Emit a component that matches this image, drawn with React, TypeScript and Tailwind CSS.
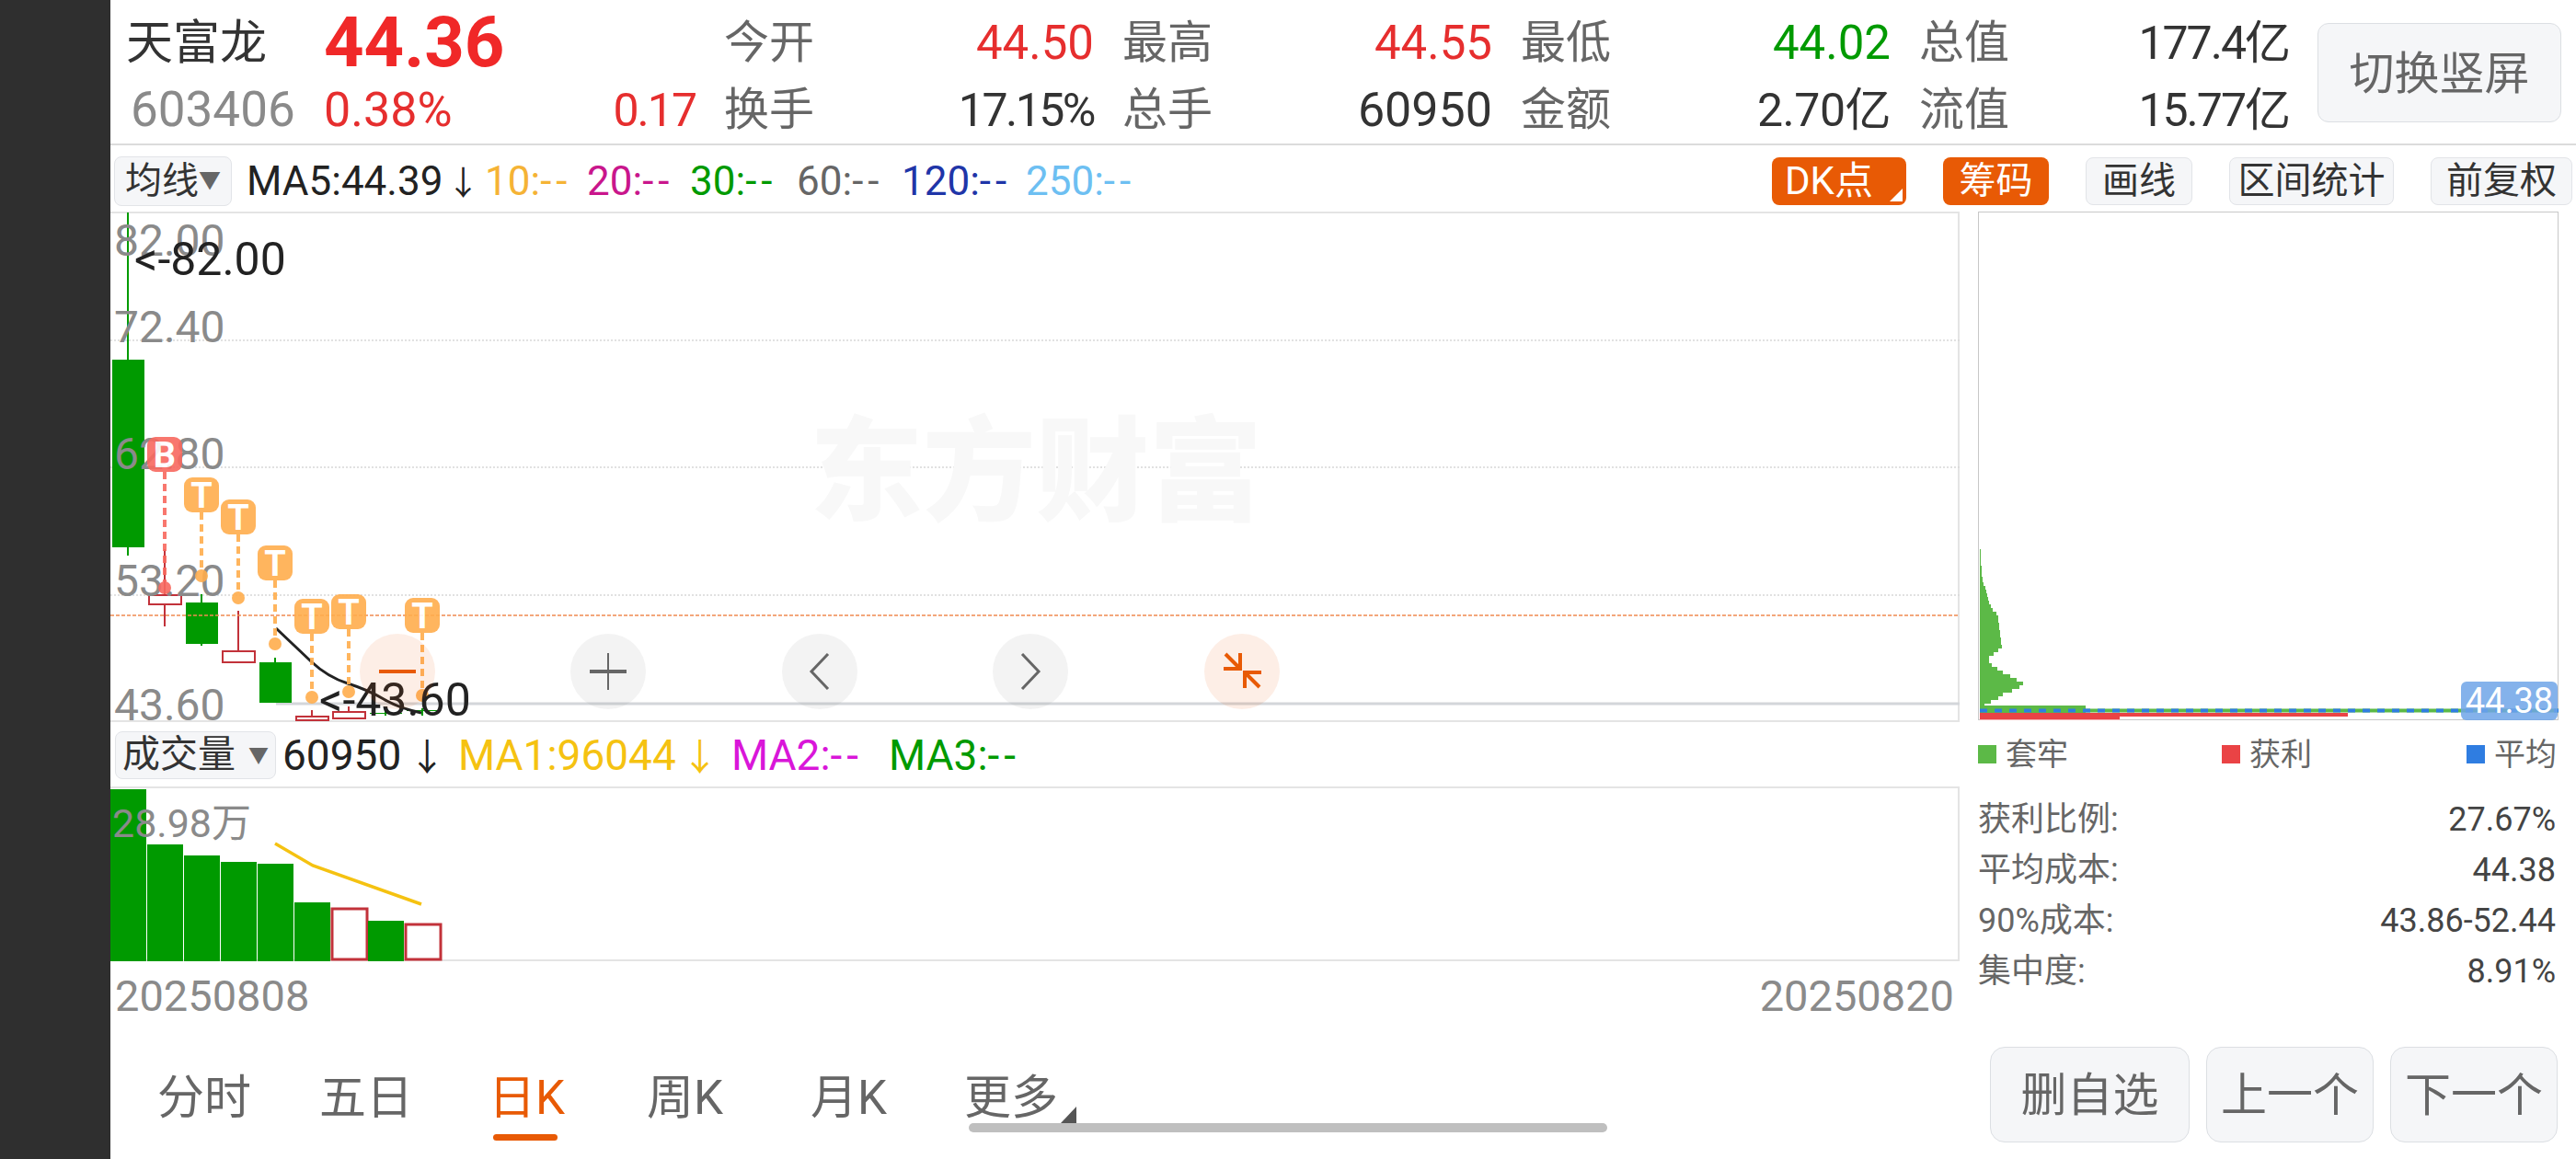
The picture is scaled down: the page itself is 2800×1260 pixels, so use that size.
import type { ReactNode } from 'react';

const FONT = { fontFamily: 'Roboto, "Noto Sans CJK SC", sans-serif' };

const GREEN = '#009a00';
const RED = '#c2323a';
const ORANGE = '#ffad4d';

// x = candle centre, top/bottom = body, hi/lo = wick
const candles = [
  { x: 139, top: 391, bottom: 595, hi: 231, lo: 604, up: false },
  { x: 179, top: 647, bottom: 657, hi: 597, lo: 681, up: true },
  { x: 219, top: 655, bottom: 700, hi: 646, lo: 702, up: false },
  { x: 259, top: 708, bottom: 720, hi: 664, lo: 720, up: true },
  { x: 299, top: 720, bottom: 764, hi: 715, lo: 764, up: false },
  { x: 339, top: 779, bottom: 783, hi: 772, lo: 783, up: true },
  { x: 379, top: 774, bottom: 781, hi: 768, lo: 781, up: true },
  { x: 419, top: 775, bottom: 776, hi: 768, lo: 778, up: false },
  { x: 459, top: 772, bottom: 773, hi: 770, lo: 778, up: false },
];

const markers = [
  { x: 179, top: 475, dot: 639, label: 'B' },
  { x: 219, top: 519, dot: 626, label: 'T' },
  { x: 259, top: 543, dot: 650, label: 'T' },
  { x: 299, top: 593, dot: 700, label: 'T' },
  { x: 339, top: 651, dot: 758, label: 'T' },
  { x: 379, top: 646, dot: 752, label: 'T' },
  { x: 459, top: 650, dot: 756, label: 'T' },
];

const priceLabels = [
  { text: '82.00', y: 278 },
  { text: '72.40', y: 372 },
  { text: '62.80', y: 510 },
  { text: '53.20', y: 648 },
  { text: '43.60', y: 783 },
];

const volumes = [
  { x: 120, top: 858, up: false },
  { x: 160, top: 918, up: false },
  { x: 200, top: 930, up: false },
  { x: 240, top: 937, up: false },
  { x: 280, top: 939, up: false },
  { x: 320, top: 981, up: false },
  { x: 360, top: 988, up: true },
  { x: 400, top: 1001, up: false },
  { x: 440, top: 1005, up: true },
];

// chip distribution: [offset from top, width]
const chips = [
  [0, 1], [6, 1], [12, 1], [18, 2], [24, 2], [30, 3], [36, 4], [40, 6], [44, 7], [48, 8], [52, 9], [56, 10],
  [60, 12], [64, 14], [68, 18], [72, 20], [76, 20], [80, 21], [84, 21], [88, 22], [92, 22], [96, 23], [100, 23],
  [104, 24], [108, 20], [112, 15], [116, 10], [120, 10], [124, 13], [128, 19], [132, 25], [136, 33], [140, 40],
  [144, 47], [148, 43], [152, 35], [156, 25], [160, 20], [164, 12], [168, 5],
];

function CandleChart() {
  return (
    <svg width={2010} height={552} viewBox="120 232 2010 552" className="block overflow-visible">
      {/* grid */}
      {[370, 508, 647].map((y) => (
        <line key={y} x1={120} x2={2130} y1={y} y2={y} stroke="#d8d8d8" strokeWidth={1.5} strokeDasharray="2 2" />
      ))}
      <line x1={300} x2={2130} y1={765} y2={765} stroke="#d3d6da" strokeWidth={3} />
      <text x={880} y={556} fontSize={123} fontWeight={900} fill="#f8f8f8" style={FONT}>
        东方财富
      </text>

      {/* candles */}
      {candles.map((c) => (
        <g key={c.x}>
          <line x1={c.x} x2={c.x} y1={c.hi} y2={c.lo} stroke={c.up ? RED : GREEN} strokeWidth={2} />
          <rect
            x={c.x - 17}
            y={c.top}
            width={35}
            height={c.bottom - c.top}
            fill={c.up ? '#fff' : GREEN}
            stroke={c.up ? RED : GREEN}
            strokeWidth={c.up ? 2 : 0}
          />
        </g>
      ))}

      <line x1={120} x2={2130} y1={669} y2={669} stroke="#ef8a50" strokeWidth={1.5} strokeDasharray="4 2" />

      {/* MA5 */}
      <path d="M300 683 Q320 702 338 719 T378 743 T417 760 T458 775" fill="none" stroke="#222" strokeWidth={3} />

      {/* axis labels */}
      {priceLabels.map((p) => (
        <text key={p.text} x={124} y={p.y} fontSize={48} fill="#8a8a8a" style={FONT}>
          {p.text}
        </text>
      ))}
      <text x={146} y={299} fontSize={50} fill="#222" style={FONT}>
        {'<-82.00'}
      </text>

      {/* trade markers */}
      {markers.map((m) => {
        const isBuy = m.label === 'B';
        const fill = isBuy ? '#f8695f' : ORANGE;
        return (
          <g key={m.x} opacity={0.9}>
            <line x1={m.x} x2={m.x} y1={m.top + 38} y2={m.dot} stroke={fill} strokeWidth={4} strokeDasharray="8 5" />
            <circle cx={m.x} cy={m.dot} r={7} fill={fill} />
            <rect x={m.x - 19} y={m.top} width={38} height={38} rx={9} fill={fill} />
            <text x={m.x} y={m.top + 33} fontSize={38} fontWeight={700} textAnchor="middle" fill="#fff" style={FONT}>
              {m.label}
            </text>
          </g>
        );
      })}

      <text x={347} y={778} fontSize={50} fill="#222" style={FONT}>
        {'<-43.60'}
      </text>
    </svg>
  );
}

function RoundButton({ tint, children, x }: { tint: string; children: ReactNode; x: string }) {
  return (
    <div className={`absolute top-[457px] ${x} flex h-[82px] w-[82px] items-center justify-center rounded-full ${tint}`}>
      {children}
    </div>
  );
}

function VolumeChart() {
  return (
    <svg width={2010} height={188} viewBox="120 857 2010 188" className="block">
      {volumes.map((v) =>
        v.up ? (
          <rect key={v.x} x={v.x + 1} y={v.top} width={38} height={1043 - v.top} fill="#fff" stroke={RED} strokeWidth={3} />
        ) : (
          <rect key={v.x} x={v.x} y={v.top} width={39} height={1045 - v.top} fill={GREEN} />
        ),
      )}
      <polyline points="299,917 340,941 458,983" fill="none" stroke="#f5c211" strokeWidth={3.5} />
      <text x={122} y={910} fontSize={43} fill="#8a8a8a" style={FONT}>
        28.98万
      </text>
    </svg>
  );
}

function ChipChart() {
  return (
    <svg width={630} height={552} viewBox="2150 232 630 552" className="block">
      {chips.map(([y, w]) => (
        <rect key={y} x={2151} y={598 + y} width={w} height={y < 36 ? 6 : 4} fill="#5cb947" />
      ))}
      <rect x={2151} y={768} width={115} height={8} fill="#5cb947" />
      <line x1={2151} x2={2780} y1={773.5} y2={773.5} stroke="#5cb947" strokeWidth={4} />
      <line x1={2151} x2={2780} y1={773.5} y2={773.5} stroke="#2f7de1" strokeWidth={4} strokeDasharray="8 8" />
      <rect x={2151} y={776} width={400} height={4} fill="#ea4345" />
      <rect x={2151} y={780} width={152} height={3} fill="#ea4345" />
      <rect x={2151} y={783} width={152} height={1} fill="#f2b5b5" />
    </svg>
  );
}

function Stat({ label, value, tone }: { label: string; value: string; tone: string }) {
  return (
    <div className="flex items-center justify-between">
      <span className="text-[49px] text-[#666]">{label}</span>
      <span className={tone}>{value}</span>
    </div>
  );
}

function MaItem({ name, color, width }: { name: string; color: string; width: string }) {
  return (
    <span className={`shrink-0 ${color} ${width}`}>
      {name}:<span className="tracking-[5px]">--</span>
    </span>
  );
}

function ChipRow({ label, value }: { label: string; value: string }) {
  return (
    <div className="flex h-[55px] items-center justify-between">
      <span className="text-[#666]">{label}</span>
      <span className="text-[#444]">{value}</span>
    </div>
  );
}

function Tool({ children }: { children: ReactNode }) {
  return (
    <div className="flex h-[52px] items-center justify-center rounded-lg border border-[#e2e4e8] bg-[#f5f6f8] text-[#333]">
      {children}
    </div>
  );
}

function BigButton({ children, className }: { children: ReactNode; className: string }) {
  return (
    <div className={`flex h-[104px] items-center justify-center rounded-2xl border border-[#dcdfe3] bg-[#f5f6f8] pt-[3px] text-[50px] text-[#666] ${className}`}>
      {children}
    </div>
  );
}

export default function App() {
  return (
    <div className="flex h-[1260px] w-[2800px] overflow-hidden bg-white" style={FONT}>
      <div className="w-[120px] shrink-0 bg-[#2f2f2f]" />

      <div className="relative flex min-w-0 flex-1 flex-col">
        {/* Quote header */}
        <div className="flex h-[159px] border-b-2 border-[#dcdcdc]">
          <div className="w-[667px] shrink-0 pl-[17px] pr-[31px] pt-[4px]">
            <div className="flex h-[86px] items-center">
              <span className="w-[215px] text-[51px] text-[#333]">天富龙</span>
              <span className="text-[76px] font-bold leading-[1.2] text-[#f02828]">44.36</span>
            </div>
            <div className="flex h-[60px] items-center">
              <span className="w-[215px] pl-[5px] text-[53px] text-[#8a8a8a]">603406</span>
              <span className="text-[52px] text-[#e62e2e]">0.38%</span>
              <span className="ml-auto text-[50px] tracking-[-2px] text-[#e62e2e]">0.17</span>
            </div>
          </div>
          <div className="grid w-[1701px] shrink-0 grid-cols-[402px_402px_402px_402px] grid-rows-[86px_60px] gap-x-[31px] pt-[4px]">
            <Stat label="今开" value="44.50" tone="text-[51px] text-[#e62e2e]" />
            <Stat label="最高" value="44.55" tone="text-[51px] text-[#e62e2e]" />
            <Stat label="最低" value="44.02" tone="text-[51px] text-[#009a00]" />
            <Stat label="总值" value="177.4亿" tone="text-[50px] tracking-[-2px] text-[#333]" />
            <Stat label="换手" value="17.15%" tone="text-[50px] tracking-[-2.5px] text-[#333]" />
            <Stat label="总手" value="60950" tone="text-[52px] text-[#333]" />
            <Stat label="金额" value="2.70亿" tone="text-[50px] tracking-[-0.5px] text-[#333]" />
            <Stat label="流值" value="15.77亿" tone="text-[50px] tracking-[-2px] text-[#333]" />
          </div>
          <div className="ml-[31px] mt-[25px] flex h-[108px] w-[265px] items-center justify-center rounded-xl border border-[#dcdfe3] bg-[#f5f6f8] pt-[3px] text-[49px] text-[#666]">
            切换竖屏
          </div>
        </div>

        {/* MA toolbar */}
        <div className="flex h-[72px] items-center pl-[4px] pt-[5px] text-[44px]">
          <div className="flex h-[54px] w-[128px] items-center justify-center rounded-lg border border-[#e2e4e8] bg-[#f5f6f8] text-[40px] text-[#333]">
            均线<span className="text-[24px] text-[#666]">▼</span>
          </div>
          <span className="ml-[16px] w-[259px] shrink-0 text-[#222]">
            MA5:44.39<span className="ml-[4px] text-[36px]">↓</span>
          </span>
          <MaItem name="10" color="text-[#f5b335]" width="w-[111px]" />
          <MaItem name="20" color="text-[#c9168c]" width="w-[112px]" />
          <MaItem name="30" color="text-[#009a00]" width="w-[116px]" />
          <MaItem name="60" color="text-[#666]" width="w-[114px]" />
          <MaItem name="120" color="text-[#1f35a8]" width="w-[135px]" />
          <MaItem name="250" color="text-[#6dbff2]" width="w-[135px]" />
          <div className="ml-auto mr-[4px] flex gap-[40px] text-[40px]">
            <div className="relative flex h-[52px] w-[146px] items-center rounded-lg bg-[#e85a05] pl-[14px] text-[42px] text-[#fff]">
              DK点
              <span className="absolute bottom-[4px] right-[4px] h-0 w-0 border-b-[14px] border-l-[14px] border-b-white border-l-transparent" />
            </div>
            <div className="flex h-[52px] w-[115px] items-center justify-center rounded-lg bg-[#e85a05] text-[#fff]">筹码</div>
            <div className="w-[116px]"><Tool>画线</Tool></div>
            <div className="w-[179px]"><Tool>区间统计</Tool></div>
            <div className="w-[154px]"><Tool>前复权</Tool></div>
          </div>
        </div>

        {/* Charts */}
        <div className="flex flex-1">
          <div className="flex w-[2010px] shrink-0 flex-col">
            <div className="relative h-[553px] border-r-2 border-t-2 border-[#e4e4e4]">
              <CandleChart />
              <RoundButton x="left-[271px]" tint="bg-[#e85a05]/10">
                <span className="h-[4px] w-[40px] bg-[#e85a05]" />
              </RoundButton>
              <RoundButton x="left-[500px]" tint="bg-[#8a8a8a]/10">
                <svg width={40} height={40} viewBox="0 0 40 40" fill="none" stroke="#666">
                  <path d="M20 0 V40" strokeWidth={2} />
                  <path d="M0 20 H40" strokeWidth={4} />
                </svg>
              </RoundButton>
              <RoundButton x="left-[730px]" tint="bg-[#8a8a8a]/10">
                <svg width={24} height={40} viewBox="0 0 24 40" fill="none" stroke="#666" strokeWidth={3}>
                  <path d="M21 1 L3 20 L21 39" />
                </svg>
              </RoundButton>
              <RoundButton x="left-[959px]" tint="bg-[#8a8a8a]/10">
                <svg width={24} height={40} viewBox="0 0 24 40" fill="none" stroke="#666" strokeWidth={3}>
                  <path d="M3 1 L21 20 L3 39" />
                </svg>
              </RoundButton>
              <RoundButton x="left-[1189px]" tint="bg-[#e85a05]/10">
                <svg width={48} height={48} viewBox="0 0 48 48" fill="none" stroke="#e85a05" strokeWidth={4}>
                  <path d="M22 4 V21 H4 M6 5 L22 21" />
                  <path d="M27 42 V25 H45 M27 25 L43 41" />
                </svg>
              </RoundButton>
            </div>

            <div className="flex h-[72px] items-center border-t-2 border-[#e4e4e4] pl-[5px] pt-[2px] text-[46px]">
              <div className="flex h-[52px] w-[175px] shrink-0 items-center justify-center gap-[14px] rounded-lg border border-[#e2e4e8] bg-[#f5f6f8] text-[41px] text-[#333]">
                成交量<span className="text-[22px] text-[#666]">▼</span>
              </div>
              <span className="ml-[7px] w-[191px] shrink-0 text-[#222]">
                60950<span className="ml-[8px] text-[40px]">↓</span>
              </span>
              <span className="w-[297px] shrink-0 text-[#f5c211]">
                MA1:96044<span className="ml-[6px] text-[40px]">↓</span>
              </span>
              <span className="w-[171px] shrink-0 text-[#d916d9]">
                MA2:<span className="tracking-[5px]">--</span>
              </span>
              <span className="text-[#009a00]">
                MA3:<span className="tracking-[5px]">--</span>
              </span>
            </div>

            <div className="h-[190px] border-y-2 border-r-2 border-[#e4e4e4]">
              <VolumeChart />
            </div>

            <div className="flex h-[62px] items-center justify-between pl-[5px] pr-[6px] pt-[14px] text-[47px] text-[#8a8a8a]">
              <span>20250808</span>
              <span>20250820</span>
            </div>

            {/* Period tabs */}
            <div className="flex h-[153px] pl-[51px] pt-[49px] text-[51px] text-[#666]">
              <span className="w-[176px]">分时</span>
              <span className="w-[184px]">五日</span>
              <span className="relative w-[172px] text-[#e85a05]">
                日K
                <span className="absolute left-[5px] top-[77px] h-[7px] w-[70px] rounded-full bg-[#e85a05]" />
              </span>
              <span className="w-[178px]">周K</span>
              <span className="w-[167px]">月K</span>
              <span className="relative">
                更多
                <span className="absolute -right-[20px] top-[47px] h-0 w-0 border-b-[18px] border-l-[17px] border-b-[#555] border-l-transparent" />
              </span>
            </div>
          </div>

          {/* Chip panel */}
          <div className="flex min-w-0 flex-1 flex-col pl-[20px]">
            <div className="relative h-[553px] w-[631px] border border-[#c8c8c8]">
              <ChipChart />
              <span className="absolute -bottom-px right-0 flex h-[42px] w-[105px] items-center justify-center rounded-md bg-[#6ea4e8]/85 text-[38px] text-white">
                44.38
              </span>
            </div>
            <div className="flex h-[60px] items-center pt-[14px] text-[34px] text-[#666]">
              <div className="flex w-[265px] items-center gap-[10px]"><span className="h-[20px] w-[20px] bg-[#5cb947]" />套牢</div>
              <div className="flex w-[266px] items-center gap-[10px]"><span className="h-[20px] w-[20px] bg-[#ea4345]" />获利</div>
              <div className="flex items-center gap-[10px]"><span className="h-[20px] w-[20px] bg-[#2f7de1]" />平均</div>
            </div>
            <div className="w-[628px] pt-[20px] text-[36px]">
              <ChipRow label="获利比例:" value="27.67%" />
              <ChipRow label="平均成本:" value="44.38" />
              <ChipRow label="90%成本:" value="43.86-52.44" />
              <ChipRow label="集中度:" value="8.91%" />
            </div>
            <div className="mt-[55px] flex gap-[18px] pl-[13px]">
              <BigButton className="w-[217px]">删自选</BigButton>
              <BigButton className="w-[182px]">上一个</BigButton>
              <BigButton className="w-[182px]">下一个</BigButton>
            </div>
          </div>
        </div>

        {/* Gesture bar */}
        <div className="absolute left-[933px] top-[1221px] h-[10px] w-[694px] rounded-full bg-[#bfbfbf]" />
      </div>
    </div>
  );
}
